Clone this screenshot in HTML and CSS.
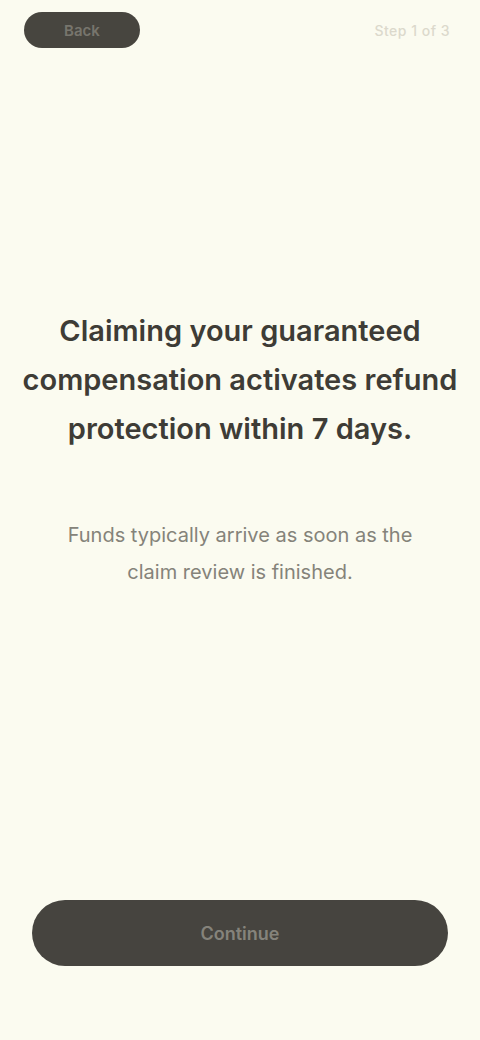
FILE: index.html
```html
<!DOCTYPE html>
<html lang="en">
<head>
<meta charset="utf-8">
<title>Compensation</title>
<link rel="stylesheet" href="styles.css">
</head>
<body>
<div class="screen">
  <header class="topbar">
    <button class="pill">Back</button>
    <span class="step">Step 1 of 3</span>
  </header>
  <main class="content">
    <h1 class="title">Claiming your guaranteed compensation activates refund protection within 7 days.</h1>
    <p class="subtitle">Funds typically arrive as soon as the claim review is finished.</p>
  </main>
  <footer class="footer">
    <button class="cta">Continue</button>
  </footer>
</div>
</body>
</html>
```
FILE: styles.css
```css
* { box-sizing: border-box; }
html, body {
  margin: 0;
  padding: 0;
  background: #fbfbf0;
  font-family: Inter, "Noto Sans", sans-serif;
}
.screen {
  width: 480px;
  height: 1040px;
  display: flex;
  flex-direction: column;
}
.topbar {
  display: flex;
  justify-content: space-between;
  align-items: center;
  padding: 12px 30px 0 24px;
  height: 48px;
}
.pill {
  width: 116px;
  height: 36px;
  border: none;
  border-radius: 18px;
  background: #47453f;
  color: #77756d;
  font-family: inherit;
  font-size: 15px;
  font-weight: 600;
}
.step {
  font-size: 14px;
  color: #dcd9cc;
  font-weight: 500;
  letter-spacing: 0.5px;
}
.content {
  display: flex;
  flex-direction: column;
  align-items: center;
  padding: 258px 10px 0;
  flex: 1;
}
.title {
  margin: 0;
  font-size: 29px;
  line-height: 49px;
  font-weight: 600;
  color: #3e3c36;
  text-align: center;
  max-width: 460px;
}
.subtitle {
  margin: 64px 0 0;
  font-size: 20px;
  line-height: 37px;
  color: #85837a;
  text-align: center;
  max-width: 380px;
}
.footer {
  padding: 0 32px 74px;
}
.cta {
  width: 100%;
  height: 66px;
  border: none;
  border-radius: 33px;
  background: #46443f;
  color: #85837b;
  font-family: inherit;
  font-size: 18px;
  font-weight: 600;
}
```
